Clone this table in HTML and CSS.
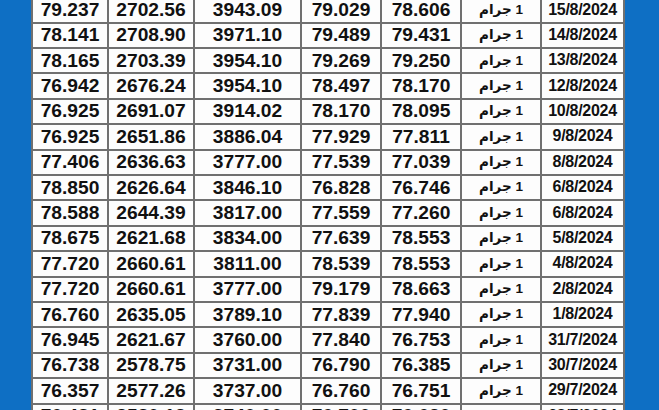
FILE: index.html
```html
<!DOCTYPE html>
<html lang="ar">
<head>
<meta charset="utf-8">
<title>أسعار الذهب</title>
<link rel="stylesheet" href="styles.css">
</head>
<body>
<div class="frame">
  <div class="grid">
    <div class="c">79.237</div><div class="c">2702.56</div><div class="c">3943.09</div><div class="c">79.029</div><div class="c">78.606</div><div class="c u"><span dir="rtl">1 جرام</span></div><div class="c d">15/8/2024</div>
    <div class="c">78.141</div><div class="c">2708.90</div><div class="c">3971.10</div><div class="c">79.489</div><div class="c">79.431</div><div class="c u"><span dir="rtl">1 جرام</span></div><div class="c d">14/8/2024</div>
    <div class="c">78.165</div><div class="c">2703.39</div><div class="c">3954.10</div><div class="c">79.269</div><div class="c">79.250</div><div class="c u"><span dir="rtl">1 جرام</span></div><div class="c d">13/8/2024</div>
    <div class="c">76.942</div><div class="c">2676.24</div><div class="c">3954.10</div><div class="c">78.497</div><div class="c">78.170</div><div class="c u"><span dir="rtl">1 جرام</span></div><div class="c d">12/8/2024</div>
    <div class="c">76.925</div><div class="c">2691.07</div><div class="c">3914.02</div><div class="c">78.170</div><div class="c">78.095</div><div class="c u"><span dir="rtl">1 جرام</span></div><div class="c d">10/8/2024</div>
    <div class="c">76.925</div><div class="c">2651.86</div><div class="c">3886.04</div><div class="c">77.929</div><div class="c">77.811</div><div class="c u"><span dir="rtl">1 جرام</span></div><div class="c d">9/8/2024</div>
    <div class="c">77.406</div><div class="c">2636.63</div><div class="c">3777.00</div><div class="c">77.539</div><div class="c">77.039</div><div class="c u"><span dir="rtl">1 جرام</span></div><div class="c d">8/8/2024</div>
    <div class="c">78.850</div><div class="c">2626.64</div><div class="c">3846.10</div><div class="c">76.828</div><div class="c">76.746</div><div class="c u"><span dir="rtl">1 جرام</span></div><div class="c d">6/8/2024</div>
    <div class="c">78.588</div><div class="c">2644.39</div><div class="c">3817.00</div><div class="c">77.559</div><div class="c">77.260</div><div class="c u"><span dir="rtl">1 جرام</span></div><div class="c d">6/8/2024</div>
    <div class="c">78.675</div><div class="c">2621.68</div><div class="c">3834.00</div><div class="c">77.639</div><div class="c">78.553</div><div class="c u"><span dir="rtl">1 جرام</span></div><div class="c d">5/8/2024</div>
    <div class="c">77.720</div><div class="c">2660.61</div><div class="c">3811.00</div><div class="c">78.539</div><div class="c">78.553</div><div class="c u"><span dir="rtl">1 جرام</span></div><div class="c d">4/8/2024</div>
    <div class="c">77.720</div><div class="c">2660.61</div><div class="c">3777.00</div><div class="c">79.179</div><div class="c">78.663</div><div class="c u"><span dir="rtl">1 جرام</span></div><div class="c d">2/8/2024</div>
    <div class="c">76.760</div><div class="c">2635.05</div><div class="c">3789.10</div><div class="c">77.839</div><div class="c">77.940</div><div class="c u"><span dir="rtl">1 جرام</span></div><div class="c d">1/8/2024</div>
    <div class="c">76.945</div><div class="c">2621.67</div><div class="c">3760.00</div><div class="c">77.840</div><div class="c">76.753</div><div class="c u"><span dir="rtl">1 جرام</span></div><div class="c d">31/7/2024</div>
    <div class="c">76.738</div><div class="c">2578.75</div><div class="c">3731.00</div><div class="c">76.790</div><div class="c">76.385</div><div class="c u"><span dir="rtl">1 جرام</span></div><div class="c d">30/7/2024</div>
    <div class="c">76.357</div><div class="c">2577.26</div><div class="c">3737.00</div><div class="c">76.760</div><div class="c">76.751</div><div class="c u"><span dir="rtl">1 جرام</span></div><div class="c d">29/7/2024</div>
    <div class="c">76.481</div><div class="c">2580.12</div><div class="c">3740.00</div><div class="c">76.700</div><div class="c">76.620</div><div class="c u"><span dir="rtl">1 جرام</span></div><div class="c d">28/7/2024</div>
  </div>
</div>
</body>
</html>
```

FILE: styles.css
```css
html, body {
  margin: 0;
  padding: 0;
  height: 100%;
  overflow: hidden;
}

body {
  background: #0e6fc4;
  font-family: "Liberation Sans", Arial, "DejaVu Sans", sans-serif;
  color: #111111;
}

.frame {
  padding-left: 31px;
  margin-top: -3.7px;
}

.grid {
  display: inline-grid;
  grid-template-columns: 74px 84px 105px 78px 78px 78px 81px;
  grid-auto-rows: 23.4px;
  gap: 2px;
  padding: 2px;
  background: #707070;
}

.c {
  background: #fdfdfd;
  display: flex;
  align-items: center;
  justify-content: center;
  font-weight: bold;
  font-size: 19.2px;
  line-height: 1;
  padding-bottom: 1px;
  box-sizing: border-box;
}

.u {
  font-size: 13.5px;
  font-family: "Liberation Sans", "DejaVu Sans", sans-serif;
}

.d {
  font-size: 16px;
  letter-spacing: -0.3px;
}
```
